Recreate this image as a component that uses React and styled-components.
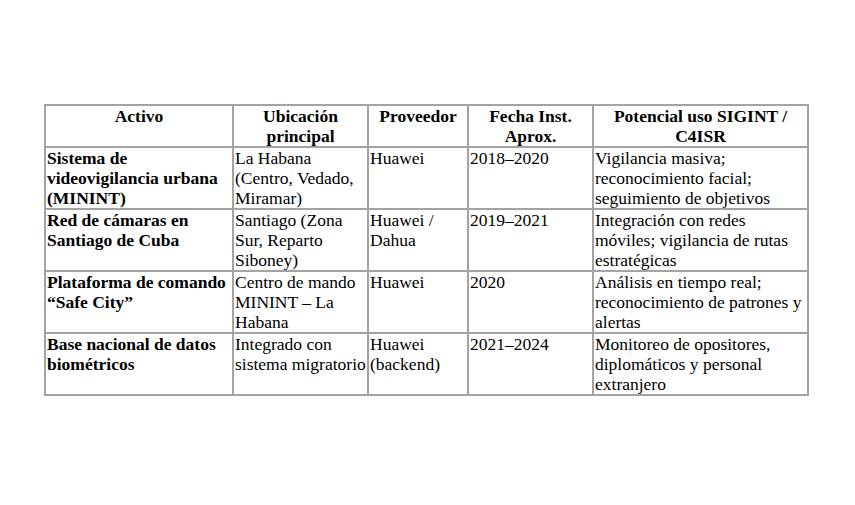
import React from "react";
import styled, { createGlobalStyle } from "styled-components";

const Global = createGlobalStyle`
  html, body { margin: 0; padding: 0; background: #ffffff; }
  body { font-family: "Liberation Serif", "Times New Roman", serif; color: #000; }
`;

const Page = styled.div`
  padding: 104px 0 0 44px;
  width: 855px;
  height: 505px;
  box-sizing: border-box;
`;

const Table = styled.table`
  border-collapse: separate;
  border-spacing: 0;
  border: 1px solid #a3a3a3;
  table-layout: fixed;
  width: 763px;
  font-family: "Liberation Serif", "Times New Roman", serif;
  font-size: 17.5px;
  line-height: 20px;
  color: #000;
`;

const Th = styled.th`
  border: 1px solid #a3a3a3;
  padding: 0 1px;
  font-family: inherit;
  font-size: inherit;
  font-weight: bold;
  text-align: center;
  vertical-align: top;
`;

const Td = styled.td`
  border: 1px solid #a3a3a3;
  padding: 0 1px;
  font-family: inherit;
  font-size: inherit;
  vertical-align: top;
  text-align: left;
  font-weight: ${(p) => (p.$bold ? "bold" : "normal")};
`;

const cols = [188, 135, 100, 125, 215];

const headers = [
  "Activo",
  "Ubicación principal",
  "Proveedor",
  "Fecha Inst. Aprox.",
  "Potencial uso SIGINT / C4ISR",
];

const rows = [
  [
    "Sistema de videovigilancia urbana (MININT)",
    "La Habana (Centro, Vedado, Miramar)",
    "Huawei",
    "2018–2020",
    "Vigilancia masiva; reconocimiento facial; seguimiento de objetivos",
  ],
  [
    "Red de cámaras en Santiago de Cuba",
    "Santiago (Zona Sur, Reparto Siboney)",
    "Huawei / Dahua",
    "2019–2021",
    "Integración con redes móviles; vigilancia de rutas estratégicas",
  ],
  [
    "Plataforma de comando “Safe City”",
    "Centro de mando MININT – La Habana",
    "Huawei",
    "2020",
    "Análisis en tiempo real; reconocimiento de patrones y alertas",
  ],
  [
    "Base nacional de datos biométricos",
    "Integrado con sistema migratorio",
    "Huawei (backend)",
    "2021–2024",
    "Monitoreo de opositores, diplomáticos y personal extranjero",
  ],
];

export default function App() {
  return (
    <>
      <Global />
      <Page>
        <Table>
          <colgroup>
            {cols.map((w, i) => (
              <col key={i} style={{ width: w }} />
            ))}
          </colgroup>
          <thead>
            <tr>
              {headers.map((h) => (
                <Th key={h}>{h}</Th>
              ))}
            </tr>
          </thead>
          <tbody>
            {rows.map((r, i) => (
              <tr key={i}>
                {r.map((c, j) => (
                  <Td key={j} $bold={j === 0}>
                    {c}
                  </Td>
                ))}
              </tr>
            ))}
          </tbody>
        </Table>
      </Page>
    </>
  );
}
